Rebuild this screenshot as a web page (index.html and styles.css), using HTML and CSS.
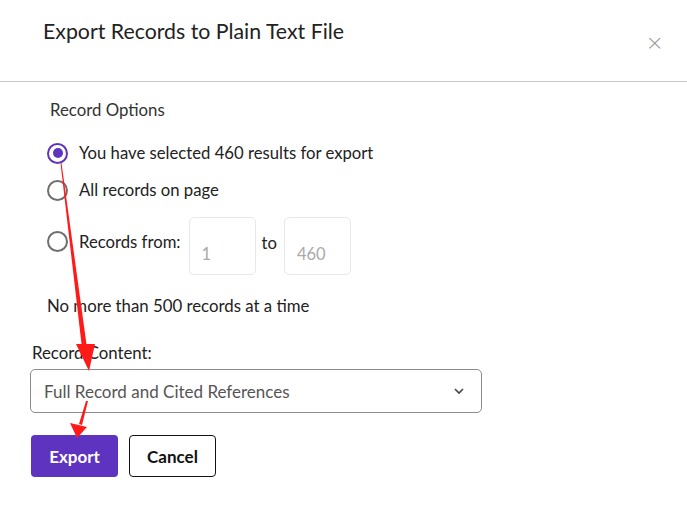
FILE: index.html
```html
<!DOCTYPE html>
<html>
<head>
<meta charset="utf-8">
<link rel="stylesheet" href="styles.css">
</head>
<body>
<div class="modal">
  <header class="head">
    <h1 class="title">Export Records to Plain Text File</h1>
    <span class="close">×</span>
  </header>
  <section class="body">
    <div class="opts-label">Record Options</div>
    <div class="radios">
      <label class="radio-row r1"><span class="radio on"></span>You have selected 460 results for export</label>
      <label class="radio-row r2"><span class="radio"></span>All records on page</label>
      <label class="radio-row r3"><span class="radio"></span><span class="rlabel">Records from:</span>
        <span class="num"><span class="ph">1</span></span>
        <span class="to">to</span>
        <span class="num"><span class="ph">460</span></span>
      </label>
    </div>
    <div class="note">No more than 500 records at a time</div>
    <div class="content-label">Record Content:</div>
    <div class="select">
      <span>Full Record and Cited References</span>
      <svg class="chev" width="12" height="8" viewBox="0 0 12 8"><path d="M2 2 L6 6 L10 2" fill="none" stroke="#444" stroke-width="1.6"/></svg>
    </div>
    <div class="actions">
      <button class="btn primary">Export</button>
      <button class="btn secondary">Cancel</button>
    </div>
  </section>
  <svg class="arrows" width="687" height="505" viewBox="0 0 687 505">
    <polygon points="60.5,163 61.5,163 87,348 82,348" fill="#ff1a1a"/>
    <polygon points="76,344 95,344 89,371" fill="#ff1a1a"/>
    <polygon points="86,401 88,401 82,425 79,424" fill="#ff1a1a"/>
    <polygon points="70,423 87,427 77,438" fill="#ff1a1a"/>
  </svg>
</div>
</body>
</html>
```
FILE: styles.css
```css
* { box-sizing: border-box; }
html, body { margin: 0; padding: 0; background: #fff; }
body {
  font-family: "Source Sans Pro", Lato, "Liberation Sans", sans-serif;
  color: #222;
  width: 687px;
  height: 505px;
  overflow: hidden;
}
.modal { position: relative; width: 687px; height: 505px; }
.head {
  height: 82px;
  border-bottom: 1px solid #c6c6c6;
  display: flex;
  justify-content: space-between;
  align-items: flex-start;
  padding: 0 23px 0 43px;
}
.title {
  margin: 18px 0 0 0;
  font-size: 21.3px;
  font-weight: 400;
  color: #222;
}
.close {
  margin-top: 30px;
  font-size: 22px;
  color: #9a9a9a;
  font-family: "DejaVu Sans", sans-serif;
  font-weight: 300;
}
.opts-label {
  margin: 18px 0 0 50px;
  font-size: 16.8px;
  line-height: 20px;
  color: #333;
}
.radios { margin: 22px 0 0 47px; display: flex; flex-direction: column; }
.radio-row {
  display: flex;
  align-items: center;
  font-size: 16.7px;
  color: #222;
}
.r1 { height: 22px; }
.r2 { height: 22px; margin-top: 15px; }
.r3 { height: 58px; margin-top: 16px; align-items: flex-start; }
.radio {
  width: 21px;
  height: 21px;
  border: 2px solid #6e6e6e;
  border-radius: 50%;
  margin-right: 11px;
  flex: none;
  position: relative;
  background: #fff;
}
.r3 .radio { margin-top: 14px; }
.rlabel { margin-top: 15px; line-height: 20px; margin-right: 1px; }
.radio.on { border-color: #5e33bf; }
.radio.on::after {
  content: "";
  position: absolute;
  left: 3.5px; top: 3.5px;
  width: 10px; height: 10px;
  border-radius: 50%;
  background: #5e33bf;
}
.num {
  width: 67px;
  height: 58px;
  border: 1px solid #e8e8e8;
  border-radius: 5px;
  margin-left: 7px;
  display: flex;
  align-items: flex-end;
  padding: 0 0 10px 12px;
}
.ph { color: #aaa; font-size: 16.5px; }
.to { margin: 16px 0 0 6px; line-height: 20px; }
.note {
  margin: 21px 0 0 47px;
  font-size: 16.8px;
  line-height: 20px;
}
.content-label {
  margin: 27px 0 0 32px;
  font-size: 16.8px;
  line-height: 20px;
}
.select {
  margin: 6px 0 0 30px;
  width: 452px;
  height: 44px;
  border: 1px solid #8c8c8c;
  border-radius: 5px;
  display: flex;
  align-items: center;
  justify-content: space-between;
  padding: 0 16px 0 13px;
  font-size: 17px;
  color: #555;
}
.actions { margin: 22px 0 0 31px; display: flex; gap: 11px; }
.btn {
  width: 87px;
  height: 42px;
  border-radius: 4px;
  font-family: inherit;
  font-size: 17px;
  font-weight: 700;
  cursor: pointer;
}
.primary { background: #5e33bf; color: #fff; border: none; }
.secondary { background: #fff; color: #111; border: 1px solid #111; }
.arrows { position: absolute; left: 0; top: 0; pointer-events: none; }
```
